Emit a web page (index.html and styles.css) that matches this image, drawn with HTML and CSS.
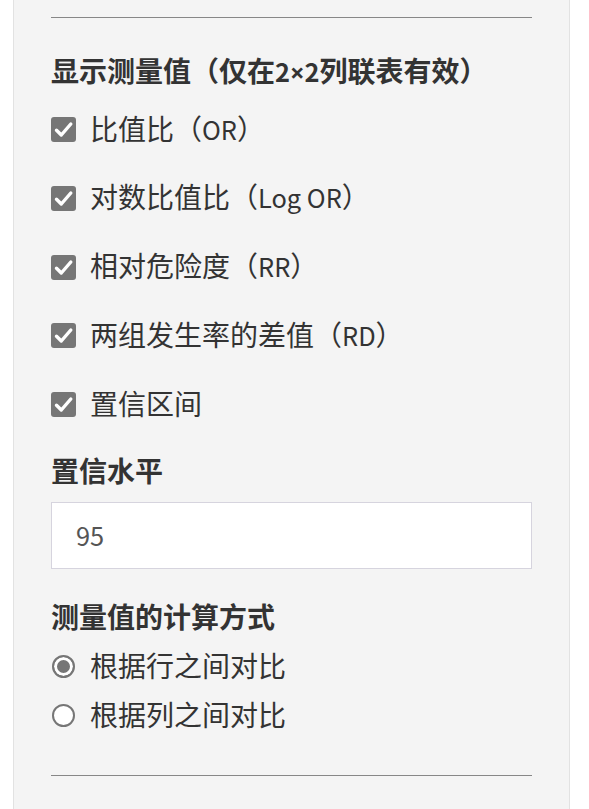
FILE: index.html
```html
<!DOCTYPE html>
<html lang="zh-CN">
  <head>
    <meta charset="UTF-8" />
    <meta name="viewport" content="width=device-width, initial-scale=1.0" />
    <title>测量值设置</title>
    <link rel="stylesheet" href="styles.css">
  </head>
  <body>
    <aside class="well">
      <hr class="well__rule" />

      <div class="field">
        <h3 class="field__title">显示测量值（仅在<span class="en">2<span class="times">×</span>2</span>列联表有效）</h3>
        <div class="choice-list choice-list--check">
          <label class="choice">
            <svg class="choice__box" viewBox="0 0 25 25" aria-hidden="true">
              <rect width="25" height="25" rx="3" />
              <path d="M5.5 13.2 L10.3 18 L19.8 7" />
            </svg>
            <span class="choice__text">比值比（<span class="en">OR</span>）</span>
          </label>
          <label class="choice">
            <svg class="choice__box" viewBox="0 0 25 25" aria-hidden="true">
              <rect width="25" height="25" rx="3" />
              <path d="M5.5 13.2 L10.3 18 L19.8 7" />
            </svg>
            <span class="choice__text">对数比值比（<span class="en">Log OR</span>）</span>
          </label>
          <label class="choice">
            <svg class="choice__box" viewBox="0 0 25 25" aria-hidden="true">
              <rect width="25" height="25" rx="3" />
              <path d="M5.5 13.2 L10.3 18 L19.8 7" />
            </svg>
            <span class="choice__text">相对危险度（<span class="en">RR</span>）</span>
          </label>
          <label class="choice">
            <svg class="choice__box" viewBox="0 0 25 25" aria-hidden="true">
              <rect width="25" height="25" rx="3" />
              <path d="M5.5 13.2 L10.3 18 L19.8 7" />
            </svg>
            <span class="choice__text">两组发生率的差值（<span class="en">RD</span>）</span>
          </label>
          <label class="choice">
            <svg class="choice__box" viewBox="0 0 25 25" aria-hidden="true">
              <rect width="25" height="25" rx="3" />
              <path d="M5.5 13.2 L10.3 18 L19.8 7" />
            </svg>
            <span class="choice__text">置信区间</span>
          </label>
        </div>
      </div>

      <div class="field">
        <h3 class="field__title">置信水平</h3>
        <div class="field__input">95</div>
      </div>

      <div class="field">
        <h3 class="field__title">测量值的计算方式</h3>
        <div class="choice-list choice-list--radio">
          <label class="choice">
            <span class="choice__dot choice__dot--on"></span>
            <span class="choice__text">根据行之间对比</span>
          </label>
          <label class="choice">
            <span class="choice__dot"></span>
            <span class="choice__text">根据列之间对比</span>
          </label>
        </div>
      </div>

      <hr class="well__rule well__rule--end" />
    </aside>
  </body>
</html>
```

FILE: styles.css
```css
* {
  box-sizing: border-box;
  margin: 0;
  padding: 0;
}
body {
  background: #fff;
  color: #333;
  font-family: "Noto Sans CJK SC", "Noto Sans", sans-serif;
  font-size: 28px;
  line-height: 40px;
}
.well {
  display: flex;
  flex-direction: column;
  width: 557px;
  min-height: 809px;
  margin-left: 13px;
  padding: 17px 37px 0;
  background: #f4f4f4;
  border-left: 1px solid #e2e2e2;
  border-right: 1px solid #e2e2e2;
}
.well__rule {
  border: 0;
  border-top: 1px solid #878787;
}
.well__rule--end {
  margin-top: 41px;
}
.field {
  display: flex;
  flex-direction: column;
}
.field:first-of-type {
  margin-top: 32px;
}
.field + .field {
  margin-top: 27px;
}
.field__title {
  font-size: 28px;
  font-weight: 700;
  line-height: 40px;
}
/* latin runs of the cjk font come out wide, shrink them a bit */
.en {
  font-size: 25.4px;
}
.times {
  font-family: "Noto Sans", sans-serif;
}
.choice-list {
  display: flex;
  flex-direction: column;
}
.choice-list--check {
  margin-top: 16px;
  gap: 28.8px;
}
.choice-list--radio {
  margin-top: 9px;
  gap: 9px;
}
.choice {
  display: flex;
  align-items: center;
  height: 40px;
}
.choice__box {
  flex: none;
  width: 25px;
  height: 25px;
  margin-top: 3px;
  margin-right: 14px;
}
.choice__box rect {
  fill: #767676;
}
.choice__box path {
  fill: none;
  stroke: #fff;
  stroke-width: 3.4;
  stroke-linecap: round;
  stroke-linejoin: round;
}
.choice__dot {
  flex: none;
  width: 23px;
  height: 23px;
  margin: 3px 15px 0 1px;
  border: 2px solid #767676;
  border-radius: 50%;
  background: #fff;
}
.choice__dot--on {
  background: #767676;
  box-shadow: inset 0 0 0 3px #fff;
}
.field__input {
  height: 67px;
  margin-top: 12px;
  padding: 0 24px;
  border: 1px solid #d6d4de;
  background: #fff;
  color: #555;
  font-size: 25.4px;
  line-height: 65px;
}
```
